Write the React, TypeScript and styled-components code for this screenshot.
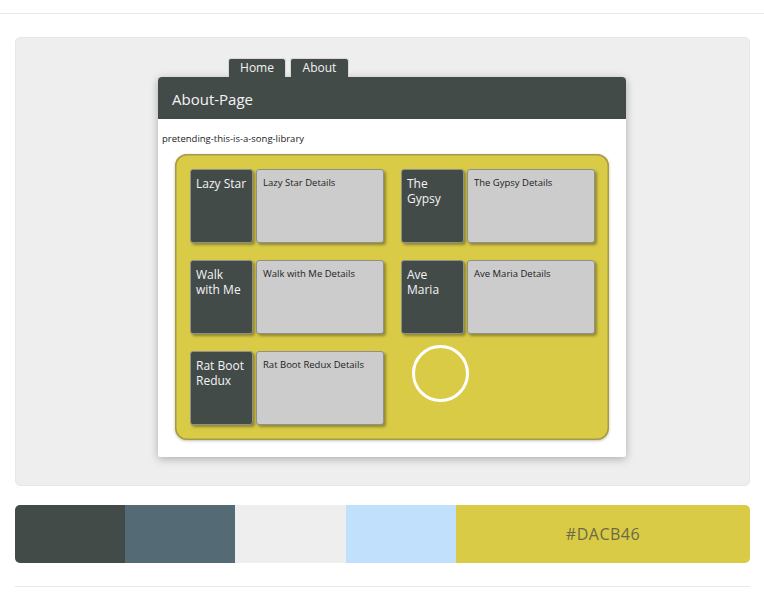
import React from "react";
import styled, { createGlobalStyle } from "styled-components";

const Global = createGlobalStyle`
  html, body { margin: 0; padding: 0; background: #fff; }
  body { font-family: "Open Sans", "Noto Sans", sans-serif; }
`;

const Page = styled.div`
  width: 764px;
  padding-top: 13px;
`;

const Rule = styled.div`
  height: 1px;
  background: #e6e8ea;
`;

const Panel = styled.div`
  margin: 23px 14px 0 15px;
  height: 449px;
  box-sizing: border-box;
  background: #eeeeee;
  border: 1px solid #e4e8ec;
  border-radius: 5px;
  padding: 20px 0 0 142px;
`;

const Tabs = styled.div`
  display: flex;
  gap: 4px;
  margin-left: 70px;
`;

const Tab = styled.div<{ $w: number }>`
  width: ${(p) => p.$w}px;
  height: 19px;
  box-sizing: border-box;
  background: #434b49;
  color: #f2f2f2;
  border: 1px solid #d8d8d8;
  border-bottom: none;
  border-radius: 3px 3px 0 0;
  font-size: 12px;
  line-height: 18px;
  text-align: center;
`;

const Card = styled.div`
  width: 468px;
  height: 380px;
  background: #fff;
  border-radius: 4px 4px 2px 2px;
  box-shadow: 0 2px 8px rgba(0, 0, 0, 0.28);
  overflow: hidden;
`;

const CardHeader = styled.div`
  height: 42px;
  background: #434b49;
  color: #f4f4f4;
  font-size: 15px;
  line-height: 44px;
  padding-left: 14px;
`;

const Caption = styled.div`
  font-size: 9.5px;
  color: #222;
  padding: 13px 0 0 4px;
  height: 22px;
`;

const Library = styled.div`
  margin-left: 17px;
  width: 434px;
  height: 286px;
  box-sizing: border-box;
  background: #dacb46;
  border-radius: 12px;
  box-shadow: inset 0 0 0 1.5px #a59b45, 0 1px 3px rgba(0, 0, 0, 0.25);
  padding: 15px 0 0 15px;
  display: grid;
  grid-template-columns: 194px 194px;
  grid-auto-rows: 74px;
  column-gap: 17px;
  row-gap: 17px;
`;

const Song = styled.div`
  display: flex;
  gap: 3px;
`;

const Title = styled.div`
  width: 63px;
  box-sizing: border-box;
  background: #434b49;
  color: #f4f4f4;
  border: 1px solid #8e918c;
  border-radius: 3px;
  box-shadow: 2px 2px 3px rgba(0, 0, 0, 0.35);
  font-size: 12px;
  line-height: 15px;
  padding: 6px 5px;
`;

const Details = styled.div`
  width: 128px;
  box-sizing: border-box;
  background: #cccccc;
  color: #222;
  border: 1px solid #8e918c;
  border-radius: 3px;
  box-shadow: 2px 2px 3px rgba(0, 0, 0, 0.35);
  font-size: 9.5px;
  padding: 6px 6px;
`;

const Spinner = styled.div`
  width: 57px;
  height: 57px;
  margin: -6px 0 0 11px;
  box-sizing: border-box;
  border: 3px solid #ffffff;
  border-radius: 50%;
`;

const Palette = styled.div`
  margin: 19px 14px 0 15px;
  height: 58px;
  display: flex;
  border-radius: 5px;
  overflow: hidden;
`;

const Swatch = styled.div<{ $bg: string; $w: number; $grow?: boolean }>`
  background: ${(p) => p.$bg};
  width: ${(p) => p.$w}px;
  flex: ${(p) => (p.$grow ? "1" : "none")};
  display: flex;
  align-items: center;
  justify-content: center;
  color: #6b6a45;
  font-size: 16px;
  letter-spacing: 0.5px;
`;

const BottomRule = styled(Rule)`
  margin: 23px 14px 0 15px;
`;

const songs = [
  "Lazy Star",
  "The Gypsy",
  "Walk with Me",
  "Ave Maria",
  "Rat Boot Redux",
];

export default function App() {
  return (
    <Page>
      <Global />
      <Rule />
      <Panel>
        <Tabs>
          <Tab $w={58}>Home</Tab>
          <Tab $w={59}>About</Tab>
        </Tabs>
        <Card>
          <CardHeader>About-Page</CardHeader>
          <Caption>pretending-this-is-a-song-library</Caption>
          <Library>
            {songs.map((s) => (
              <Song key={s}>
                <Title>{s}</Title>
                <Details>{s} Details</Details>
              </Song>
            ))}
            <Spinner />
          </Library>
        </Card>
      </Panel>
      <Palette>
        <Swatch $bg="#434b49" $w={110} />
        <Swatch $bg="#546a75" $w={110} />
        <Swatch $bg="#eeeeee" $w={111} />
        <Swatch $bg="#c0e0fc" $w={110} />
        <Swatch $bg="#dacb46" $w={0} $grow>
          #DACB46
        </Swatch>
      </Palette>
      <BottomRule />
    </Page>
  );
}
